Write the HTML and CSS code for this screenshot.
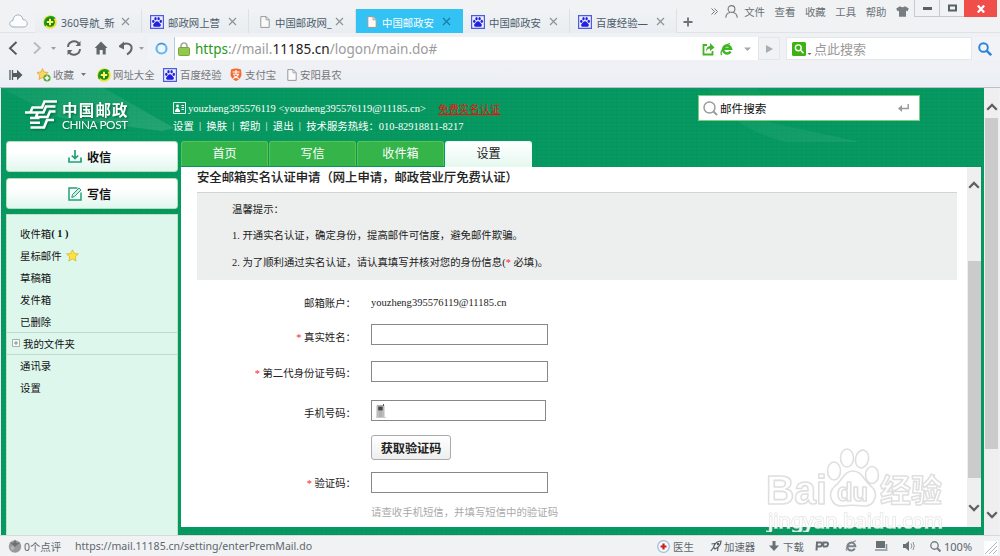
FILE: index.html
```html
<!DOCTYPE html>
<html lang="zh-CN">
<head>
<meta charset="utf-8">
<title>中国邮政安全邮箱</title>
<link rel="stylesheet" href="styles.css">
</head>
<body>
<svg class="defs" aria-hidden="true">
  <symbol id="page" viewBox="0 0 10 12"><path d="M.8.6h5.4l3 3v7.8H.8z" fill="#fafafa" stroke="#999" stroke-width="1"/><path d="M6 .8v3h3" fill="none" stroke="#999" stroke-width=".9"/></symbol>
  <symbol id="paw" viewBox="0 0 14 14"><path d="M.6.6h12.8v12.8H.6z" fill="#eef" stroke="#4d5be0" stroke-width="1.2"/><g fill="#2222dc"><ellipse cx="3.3" cy="6.3" rx="1.2" ry="1.6"/><ellipse cx="5.5" cy="3.7" rx="1.2" ry="1.6"/><ellipse cx="8.6" cy="3.7" rx="1.2" ry="1.6"/><ellipse cx="10.8" cy="6.3" rx="1.2" ry="1.6"/><path d="M7 6.3c1.6 0 2.2 1.7 3.2 2.5 1.5 1.4.3 3.4-1.5 3H5.3c-1.8.4-3-1.6-1.5-3C4.800 8 5.400 6.300 7 6.300z"/></g></symbol>
  <symbol id="plus360" viewBox="0 0 14 14"><circle cx="7" cy="7" r="6.800" fill="#e9e32a"/><path d="M2 11.500A6.800 6.800 0 0 1 12.500 3L7 7z" fill="#279b25"/><circle cx="7.200" cy="7.200" r="4.600" fill="#168621"/><path d="M7 3.800v6.400M3.800 7h6.400" stroke="#fff95c" stroke-width="2"/></symbol>
  <symbol id="close" viewBox="0 0 9 9"><path d="M1 1l7 7M8 1L1 8" fill="none" stroke="currentColor" stroke-width="1.2"/></symbol>
  <symbol id="up" viewBox="0 0 12 8"><path d="M1.200 6.800L6 2l4.800 4.800" fill="none" stroke="#606060" stroke-width="2.300"/></symbol>
  <symbol id="down" viewBox="0 0 12 8"><path d="M1.200 1.200L6 6l4.800-4.800" fill="none" stroke="#606060" stroke-width="2.300"/></symbol>
</svg>
<div class="window">
  <header class="titlebar">
    <div class="cloud"><svg width="19" height="14" viewBox="0 0 19 14"><path d="M5 13C-.5 13-.5 7 4 6.500 4-.5 13-1 14 5.500c5 0 6 7.500.5 7.500z" fill="#fafcfd" stroke="#9db0bd"/></svg></div>
    <nav class="tabs">
      <div class="tab"><svg class="fav"><use href="#plus360"/></svg><span class="name">360导航_新</span><svg class="x"><use href="#close"/></svg></div>
      <div class="tab"><svg class="fav"><use href="#paw"/></svg><span class="name">邮政网上营</span><svg class="x"><use href="#close"/></svg></div>
      <div class="tab"><svg class="fav doc"><use href="#page"/></svg><span class="name">中国邮政网_</span><svg class="x"><use href="#close"/></svg></div>
      <div class="tab active"><svg class="fav doc"><use href="#page"/></svg><span class="name">中国邮政安</span><svg class="x"><use href="#close"/></svg></div>
      <div class="tab"><svg class="fav"><use href="#paw"/></svg><span class="name">中国邮政安</span><svg class="x"><use href="#close"/></svg></div>
      <div class="tab"><svg class="fav"><use href="#paw"/></svg><span class="name">百度经验—</span><svg class="x"><use href="#close"/></svg></div>
    </nav>
    <svg class="newtab" width="10" height="10" viewBox="0 0 10 10"><path d="M5 .5v9M.5 5h9" stroke="#6b7278" stroke-width="1.800"/></svg>
    <div class="menu">
      <svg width="7" height="7" viewBox="0 0 7 7"><path d="M.5.5l3 3-3 3M3.500.5l3 3-3 3" fill="none" stroke="#777"/></svg>
      <svg class="person" width="13" height="13" viewBox="0 0 13 13"><circle cx="6.500" cy="4" r="3.400" fill="none" stroke="#777" stroke-width="1.100"/><path d="M.8 12.800c0-3 2-4.800 4.200-5.300M12.200 12.800c0-3-2-4.800-4.200-5.300" fill="none" stroke="#777" stroke-width="1.100"/></svg>
      <span>文件</span><span>查看</span><span>收藏</span><span>工具</span><span>帮助</span>
      <svg width="13" height="11" viewBox="0 0 13 11"><path d="M4 .3Q6.500 2 9 .3l3.800 2.200-1.300 2.800-1.500-.6V10.700H3V4.700l-1.500.6L.2 2.500z" fill="#777d80"/></svg>
    </div>
    <div class="controls">
      <div class="ctl"><svg width="9" height="3"><path d="M0 0h9v3H0z" fill="#596065"/></svg></div>
      <div class="ctl"><svg width="9" height="8"><path d="M1 1.500h7v5H1z" fill="none" stroke="#596065" stroke-width="2"/></svg></div>
      <div class="ctl shut"><svg width="8" height="8"><path d="M.8.5l6.400 7M7.200.5l-6.400 7" stroke="#fff" stroke-width="2.200"/></svg></div>
    </div>
  </header>

  <div class="toolbar">
    <div class="navicons">
      <svg width="114" height="18" viewBox="0 0 114 18">
        <path d="M11.500 3L5 9.200l6.500 6.200" fill="none" stroke="#53595e" stroke-width="2"/>
        <path d="M29 3.500L35 9l-6 5.500" fill="none" stroke="#b5babe" stroke-width="1.800"/>
        <path d="M46 8h5l-2.500 3z" fill="#999fa3"/>
        <path d="M63 8a6 6 0 0 1 11-3M75 10a6 6 0 0 1-11 3" fill="none" stroke="#60676c" stroke-width="2"/><path d="M75.500 2v5h-5zM62.500 16v-5h5z" fill="#60676c"/>
        <path d="M96 2.500l6.500 6.500h-1.800v6.500h-3V11h-3v4.500h-3.200V9h-1.800z" fill="#60676c"/>
      </svg>
      <svg width="30" height="18" viewBox="0 0 30 18"><path d="M2.500 6.500C7 2.500 13.500 5 12.500 10c-.4 2.500-2 4-4.500 5.500" fill="none" stroke="#60676c" stroke-width="2"/><path d="M-1 7.500L5 2.500v8z" fill="#60676c"/><path d="M20 8h5l-2.500 3z" fill="#999fa3"/></svg>
    </div>
    <div class="address">
      <div class="globe"><svg width="13" height="13"><circle cx="6.500" cy="6.500" r="5" fill="#e9f8ff" stroke="#6db5e8" stroke-width="2.200"/><path d="M3 3a5 5 0 0 1 7 0" fill="none" stroke="#4181c4" stroke-width="1"/></svg></div>
      <svg class="lock" width="12" height="14" viewBox="0 0 12 14"><path d="M3 6V4a3 3 0 0 1 6 0v2" fill="none" stroke="#a8aaa5" stroke-width="1.700"/><rect x=".5" y="5.500" width="11" height="8" rx="1" fill="#92c94c" stroke="#76a942"/></svg>
      <div class="url"><span class="scheme">https</span>://mail.<span class="domain">11185.cn</span>/logon/main.do#</div>
      <svg class="addr-icons" width="50" height="14" viewBox="0 0 50 14">
        <path d="M5 3H1.500v9.500h9V9" fill="none" stroke="#42b427" stroke-width="1.800"/><path d="M4 10c0-4 1.500-6 4-6V1l4.500 4.500L8 9V6.500C6 6.500 5 7.500 4 10z" fill="#42b427"/>
        <path d="M28.500 9.500a4 4 0 1 1 .5-2.800h-7" fill="none" stroke="#42b427" stroke-width="2.500"/><path d="M20 13c-3-2 2-10 8-11.500" fill="none" stroke="#42b427" stroke-width="1.200"/>
        <path d="M42 5.500h7L45.500 9z" fill="#a5a9ac"/>
      </svg>
    </div>
    <div class="go"><svg width="7" height="8"><path d="M0 0l7 4-7 4z" fill="#a9adb2"/></svg></div>
    <div class="search">
      <svg class="so" width="20" height="14" viewBox="0 0 20 14"><rect width="14" height="14" rx="1.500" fill="#3db313"/><circle cx="6.300" cy="5.800" r="2.900" fill="none" stroke="#fff" stroke-width="1.400"/><path d="M8.500 8l3 3.200" stroke="#fff" stroke-width="1.600"/><path d="M15.500 11h4L17.500 13z" fill="#666"/></svg>
      <span>点此搜索</span>
    </div>
    <div class="find"><svg width="14" height="14"><circle cx="5.500" cy="5.500" r="4.300" fill="none" stroke="#2b82dc" stroke-width="1.900"/><path d="M8.600 8.600l4.600 4.600" stroke="#2b82dc" stroke-width="2.400"/></svg></div>
  </div>

  <div class="bookmarks">
    <svg class="b-side" width="14" height="12" viewBox="0 0 14 12"><path d="M1 1v10M3.500 1v10" stroke="#555c60" stroke-width="1.300"/><path d="M4 4h4V.8L13.500 6 8 11.200V8H4z" fill="#555c60"/></svg>
    <div class="bm b-fav"><svg width="14" height="14" viewBox="0 0 14 14"><path d="M5.500.7L7 4l4 .5-3 3 .8 4-3.500-2L2 11.500l.6-4L0 4.500 4 4z" fill="#ffd462" stroke="#e6a338" stroke-width=".8"/><circle cx="10" cy="10" r="3.600" fill="#53ad36"/><path d="M10 7.800v4.400M7.800 10h4.400" stroke="#fff" stroke-width="1.500"/></svg><span>收藏</span><svg class="caret" width="5" height="3"><path d="M0 0h5L2.500 3z" fill="#777"/></svg></div>
    <div class="bm b-nav"><svg width="14" height="14"><use href="#plus360"/></svg><span>网址大全</span></div>
    <div class="bm b-baidu"><svg width="14" height="14"><use href="#paw"/></svg><span>百度经验</span></div>
    <div class="bm b-pay"><svg width="12" height="13" viewBox="0 0 12 13"><path d="M1 1.500Q6-.5 11 1.500L11.500 7Q10.500 11 6 13 1.500 11 .5 7z" fill="#f06c32"/><path d="M2.500 4h7M6 2v4M3 6.300h5.500C7.500 9 5 10 2.800 10.500M4 7.500c1 1.500 3 2.500 5 3" fill="none" stroke="#fff" stroke-width="1.100"/></svg><span>支付宝</span></div>
    <div class="bm b-doc"><svg width="10" height="12"><use href="#page"/></svg><span>安阳县农</span></div>
  </div>

  <div class="viewport">
    <div class="mail">
      <div class="masthead">
        <svg class="rays" width="983" height="54" viewBox="0 0 983 54"><defs><linearGradient id="ray" x1="0" y1="0" x2="1" y2="1"><stop offset="0" stop-color="#fff" stop-opacity=".04"/><stop offset="1" stop-color="#fff" stop-opacity=".12"/></linearGradient></defs><path d="M0 0h103l70 40-12 3L60 30z" fill="url(#ray)"/><path d="M707 0h50l10 34 92 20h-75Q725 38 707 0z" fill="url(#ray)" opacity=".55"/></svg>
        <div class="logo">
          <svg width="32" height="29" viewBox="0 0 32 29"><g fill="none" stroke="#fff" stroke-width="2.600"><path d="M32 1.500H19.500l-2.500 6H7.500l-2 4.800M30.500 6.500H21l-2.500 6H0M30.500 11.500h-5.500l-2.500 5.500H11l1.500-4M5 18h9.500M5.500 27.500H19l3-7.500h7M5 22.700h10"/></g></svg>
          <div class="brand"><b>中国邮政</b><span>CHINA POST</span></div>
        </div>
        <div class="account">
          <div class="user"><svg width="13" height="12" viewBox="0 0 13 12"><path d="M.5.5h12v11H.5z" fill="none" stroke="#e3f5ee"/><circle cx="4.500" cy="4" r="1.400" fill="#fff"/><path d="M2 10V8.500L4 6h1l2 2.500V10zM8.500 3h2.500v1H8.500zM8.500 5h2.500v1H8.500zM8.500 7h2.500v1H8.500z" fill="#fff"/></svg><span class="uid">youzheng395576119 &lt;youzheng395576119@11185.cn&gt;</span><a>免费实名认证</a></div>
          <div class="links"><span>设置</span><i>|</i><span>换肤</span><i>|</i><span>帮助</span><i>|</i><span>退出</span><i>|</i><span>技术服务热线：010-82918811-8217</span></div>
        </div>
        <div class="mailsearch"><svg width="15" height="15"><circle cx="6.500" cy="6.500" r="5.500" fill="none" stroke="#999" stroke-width="1.400"/><path d="M10.500 10.500L14 14" stroke="#999" stroke-width="1.800"/></svg><span>邮件搜索</span><svg class="enter" width="11" height="8" viewBox="0 0 11 8"><path d="M10.200 0v4.500H3" fill="none" stroke="#999" stroke-width="1.400"/><path d="M0 4.500L4 1v7z" fill="#999"/></svg></div>
      </div>
      <div class="body">
        <aside class="side">
          <div class="big"><svg width="14" height="13" viewBox="0 0 14 13"><path d="M1 7.500V12h12V7.500M7 0v8M3.800 5.500L7 8.600l3.200-3.100" fill="none" stroke="#20a277" stroke-width="1.700"/></svg><b>收信</b></div>
          <div class="big"><svg width="14" height="14" viewBox="0 0 14 14"><path d="M9.500 1H1v12h12V5.500" fill="none" stroke="#20a277" stroke-width="1.500"/><path d="M3.800 10.500l.7-3L11 1l2 2-6.500 6.500z" fill="#c8ebdd" stroke="#20a277"/></svg><b>写信</b></div>
          <div class="folders">
            <div>收件箱<b>( 1 )</b></div>
            <div>星标邮件<svg class="star" width="13" height="13" viewBox="0 0 13 13"><path d="M6.500.8l1.700 3.700 4.200.5-3.100 2.800.8 4.200-3.600-2.100-3.700 2.100.9-4.200L.6 5l4.200-.5z" fill="#ffe23c" stroke="#d6b62c" stroke-width=".8"/></svg></div>
            <div>草稿箱</div>
            <div>发件箱</div>
            <div>已删除</div>
            <div class="group"><svg width="8" height="8"><path d="M.5.5h7v7h-7z" fill="#f4fcf8" stroke="#a7b0ac"/><path d="M2 4h4M4 2v4" stroke="#777" stroke-width=".8"/></svg>我的文件夹</div>
            <div>通讯录</div>
            <div>设置</div>
          </div>
        </aside>
        <main class="main">
          <div class="pagetabs"><span>首页</span><span>写信</span><span>收件箱</span><span class="on">设置</span></div>
          <div class="frame">
            <div class="content">
              <h1>安全邮箱实名认证申请（网上申请，邮政营业厅免费认证）</h1>
              <div class="tips">
                <p>温馨提示：</p>
                <p>1. 开通实名认证，确定身份，提高邮件可信度，避免邮件欺骗。</p>
                <p>2. 为了顺利通过实名认证，请认真填写并核对您的身份信息(<em>*</em> 必填)。</p>
              </div>
              <form class="form">
                <label>邮箱账户：</label><span class="mailbox">youzheng395576119@11185.cn</span>
                <label class="low"><em>*</em> 真实姓名：</label><div class="box"></div>
                <label class="low"><em>*</em> 第二代身份证号码：</label><div class="box"></div>
                <label class="low">手机号码：</label><div class="box phone"><svg width="10" height="14" viewBox="0 0 10 14"><path d="M1 1.500h7v12H1z" fill="#ccc" stroke="#999" stroke-width=".7"/><path d="M7.500 0v2" stroke="#555"/><path d="M2.200 2.500h4.500v4H2.200z" fill="#444"/><path d="M2.500 8h4M2.500 10h4M2.500 12h4" stroke="#888" stroke-width=".8"/><path d="M0 13.500h10" stroke="#ccc"/></svg></div>
                <label></label><button type="button">获取验证码</button>
                <label><em>*</em> 验证码：</label><div class="box"></div>
                <label></label><span class="hint">请查收手机短信，并填写短信中的验证码</span>
              </form>
            </div>
            <div class="scroll inner"><svg width="12" height="8"><use href="#up"/></svg><div class="thumb"></div><svg width="12" height="8"><use href="#down"/></svg></div>
          </div>
        </main>
      </div>
    </div>
    <div class="scroll outer"><svg width="12" height="8"><use href="#up"/></svg><div class="thumb"></div><svg width="12" height="8"><use href="#down"/></svg></div>
  </div>

  <footer class="status">
    <svg class="tomato" width="14" height="14" viewBox="0 0 14 14"><circle cx="7" cy="7.500" r="6.200" fill="#999"/><path d="M1.500 3.500L5.500 4 7 .5 8.500 4l4-.5L9 6l-2 2-2-2z" fill="#707070"/><circle cx="4.500" cy="9" r="2" fill="#b5b5b5"/></svg>
    <span class="reviews">0个点评</span>
    <span class="target">https://mail.11185.cn/setting/enterPremMail.do</span>
    <div class="tools">
      <svg class="t-doc" width="13" height="13"><circle cx="6.500" cy="6.500" r="5.800" fill="#f7fbff" stroke="#a2bddb" stroke-width="1.300"/><path d="M6.500 3.500v6M3.500 6.500h6" stroke="#cf1e1e" stroke-width="2.200"/></svg><span class="w-doc">医生</span>
      <svg class="t-rocket" width="12" height="12"><path d="M3.500 7C5 3 7 1 11 1c0 4-2 6-6 8zM5 3.500L1.500 4M8 7.500L7.500 11M3.500 7.500L.8 11" fill="none" stroke="#555d62" stroke-width="1.200"/><circle cx="8" cy="4" r="1.200" fill="#555d62"/></svg><span class="w-rocket">加速器</span>
      <svg class="t-down" width="10" height="10"><path d="M5 0v6" stroke="#697176" stroke-width="3"/><path d="M0 4.500h10L5 10z" fill="#697176"/></svg><span class="w-down">下载</span>
      <svg class="t-glass" width="14" height="10" viewBox="0 0 14 10"><path d="M1.500 9.500L2 1.500h3.500c2.500 0 1.500 4-.5 4H2.500M8 5.500l.5-4h3c2.500 0 1.500 4-.5 4H8" fill="none" stroke="#697176" stroke-width="2"/></svg>
      <svg class="t-ie" width="12" height="12" viewBox="0 0 12 12"><path d="M9.800 8.500a4 4 0 1 1 .5-2.300h-7" fill="none" stroke="#7b8388" stroke-width="2"/><path d="M2 11C-1 9 5 2 11 .8" fill="none" stroke="#7b8388"/></svg>
      <svg class="t-win" width="13" height="10"><path d="M1 0h9v7H1z" fill="#697176"/><path d="M11.500 3v5M0 9h12.500" stroke="#8a9195" stroke-width="1.600"/></svg>
      <svg class="t-vol" width="12" height="10"><path d="M0 3h2.500L6 0v10L2.500 7H0z" fill="#697176"/><path d="M8 2.500q2 2.500 0 5M10 1q2.500 4 0 8" fill="none" stroke="#8d9498"/></svg>
      <svg class="t-zoom" width="11" height="11"><circle cx="4.500" cy="4.500" r="3.700" fill="none" stroke="#777f84" stroke-width="1.400"/><path d="M7 7l3.500 3.500" stroke="#777f84" stroke-width="2"/></svg><span class="pct">100%</span>
    </div>
    <svg class="grip" width="14" height="14"><path d="M0 0h14v14H0z" fill="#fff"/><path d="M1 13L13 1M5 13l8-8M9 13l4-4" stroke="#adbac5"/></svg>
  </footer>
  <svg class="watermark" width="190" height="92" viewBox="0 0 190 92">
    <g fill="#fff" stroke="#dcdcdc" stroke-width="1.600" stroke-linejoin="round">
      <text class="wm-latin" x="6" y="64" textLength="61" lengthAdjust="spacingAndGlyphs">Bai</text>
      <ellipse cx="74" cy="31" rx="6.500" ry="9"/><ellipse cx="87" cy="18" rx="6.500" ry="9"/><ellipse cx="102" cy="19" rx="6.500" ry="9" transform="rotate(12 102 19)"/><ellipse cx="112" cy="35" rx="6.500" ry="8.500"/>
      <path d="M93 31c9 0 11 10 18 15 9 8 3 21-8 20-7-1-14-1-20 0-11 1-17-12-8-20 7-5 9-15 18-15z"/>
      <text class="wm-du" x="77" y="61" textLength="31" lengthAdjust="spacingAndGlyphs">du</text>
      <text class="wm-cjk" x="120" y="62" textLength="62" lengthAdjust="spacingAndGlyphs">经验</text>
    </g>
    <text class="wm-url" x="8" y="88" textLength="175" lengthAdjust="spacingAndGlyphs">jingyan.baidu.com</text>
  </svg>
</div>
</body>
</html>
```
FILE: styles.css
```css
* { box-sizing: border-box; }
body { margin: 0; font-family: "Noto Sans", "Noto Sans CJK SC", sans-serif; font-size: 10.4px; color: #222; }
svg { display: block; flex: none; }
.defs { position: absolute; width: 0; height: 0; }
.window { position: relative; width: 1000px; height: 556px; overflow: hidden; display: flex; flex-direction: column; background: #f0f2f4; white-space: nowrap; }
span, b, label, a { flex: none; }

/* Title bar */
.titlebar { height: 33px; display: flex; flex: none; border-bottom: 1px solid #dfe3e6; }
.cloud { width: 35px; padding: 14px 0 0 9px; }
.tabs { display: flex; padding-top: 9px; }
.tab { width: 107px; height: 24px; display: flex; align-items: center; padding: 2px 0 0 8px; border-right: 1px solid #dce1e6; background: linear-gradient(#f1f3f5, #e9edf1); color: #4c5b6b; }
.tab.active { background: #33c2f4; color: #fff; border: 0; }
.fav { width: 14px; height: 14px; margin-right: 4px; }
.fav.doc { width: 10px; height: 12px; margin: 0 5px 0 3px; }
.name { width: 57px; margin-right: 3px; }
.tab .x { width: 9px; height: 9px; color: #8c949a; margin-top: -2px; }
.active .x { color: #197c9d; }
.newtab { margin: 17px 18px 0 6px; }
.menu { display: flex; height: 22px; align-items: center; color: #6b7175; gap: 9.600px; }
.menu .person { margin: 0 -3px 0 -3px; }
.controls { display: flex; margin-left: auto; padding-right: 3px; }
.ctl { width: 25px; height: 17px; display: flex; align-items: center; justify-content: center; border: 1px solid #c5cad0; border-top: 0; border-right: 0; }
.ctl.shut { width: 33px; background: #ef4e4b; border: 0; }

/* Address bar */
.toolbar { height: 30px; flex: none; display: flex; padding-top: 4px; background: #eff1f5; }
.toolbar > div { height: 23px; }
.navicons { width: 148px; display: flex; align-items: center; padding-left: 5px; }
.navicons svg { margin-top: -2px; }
.address { width: 610px; background: #fff; display: flex; align-items: center; }
.globe { width: 27px; height: 23px; display: flex; align-items: center; justify-content: center; background: #f0f4f8; border-right: 1px solid #b7c9dd; }
.lock { margin-left: 3px; }
.url { margin-left: 5px; font-size: 13.540px; color: #9b9b9b; }
.scheme { color: #1d9b18; }
.domain { color: #222; }
.addr-icons { margin-left: auto; margin-right: 6px; }
.go { width: 22px; background: #f1f2f4; border: 1px solid #e4e7ea; display: flex; align-items: center; justify-content: center; }
.search { width: 186px; margin-left: 6px; background: #fff; border: 1px solid #e4e7ea; display: flex; align-items: center; padding-left: 5px; font-size: 13px; color: #999; gap: 2px; }
.find { width: 28px; background: #f1f3f6; display: flex; align-items: center; justify-content: center; }
.find svg { margin-left: -2px; }

/* Bookmarks */
.bookmarks { height: 25px; flex: none; display: flex; align-items: center; background: linear-gradient(#eff1f5, #ebeff5); border-bottom: 1px solid #bcc1c5; color: #777; padding: 0 0 1px 9px; }
.bm { display: flex; align-items: center; gap: 3px; }
.b-fav { width: 60px; margin-left: 14px; gap: 2px; }
.b-fav .caret { margin-left: 5px; }
.b-nav { width: 66px; gap: 2px; }
.b-baidu { width: 67px; }
.b-pay { width: 57px; }

/* Mail page */
.viewport { height: 447px; flex: none; display: flex; padding-left: 1px; }
.mail { width: 983px; display: flex; flex-direction: column; background-color: #069961; background-image: repeating-linear-gradient(0deg, rgba(0,70,40,.045) 0 1px, transparent 1px 4px), repeating-linear-gradient(90deg, rgba(0,70,40,.045) 0 1px, transparent 1px 5px); }
.masthead { position: relative; height: 53px; flex: none; display: flex; color: #fff; }
.rays { position: absolute; left: 0; top: 0; }
.logo { position: relative; width: 172px; display: flex; padding: 12px 0 0 24px; gap: 5px; filter: drop-shadow(1px 1px 1px #00693f); }
.brand { display: flex; flex-direction: column; padding-top: 1px; }
.brand b { font-size: 15.500px; line-height: 18px; letter-spacing: 1.200px; }
.brand span { font-family: Lato, sans-serif; font-size: 11.800px; line-height: 12px; letter-spacing: -.4px; }
.account { position: relative; width: 525px; padding-top: 11px; font-family: "Liberation Serif", "Noto Sans CJK SC", serif; }
.user, .links { display: flex; height: 18px; align-items: center; }
.links { margin-top: -1px; }
.uid { width: 238px; margin: 0 12px 0 2px; font-size: 10.530px; }
.user a { color: #e6130b; text-decoration: underline; }
.links i { width: 12.500px; text-align: center; font-style: normal; }
.mailsearch { position: relative; width: 222px; height: 26px; margin-top: 7px; padding: 0 10px 0 4px; background: #fff; border: 1px solid #7bd07b; color: #111; display: flex; align-items: center; gap: 2px; font-size: 11.600px; }
.enter { margin-left: auto; }
.body { display: flex; height: 394px; padding-left: 5px; }
.side { width: 175px; padding-right: 3px; display: flex; flex-direction: column; gap: 6px; }
.big { height: 31px; flex: none; border: 1px solid #b4dfb6; border-radius: 3px; background: linear-gradient(#fff 35%, #e0f7ee); display: flex; align-items: center; padding-left: 61px; gap: 5px; font-size: 12.100px; color: #111; }
.folders { flex: 1; margin-top: -1px; padding-top: 8px; background: #def7ed; border: 1px solid #bce4bf; border-bottom: 0; font-family: "Liberation Serif", "Noto Sans CJK SC", serif; color: #111; }
.folders > div { height: 21.800px; display: flex; align-items: center; padding-left: 13px; }
.folders .star { margin-left: 4px; }
.folders .group { height: 23px; padding-left: 5px; gap: 3px; border: 1px solid #c1d9cc; border-width: 1px 0; }
.main { width: 800px; }
.pagetabs { display: flex; height: 26px; gap: 1px; }
.pagetabs span { width: 87px; height: 25px; border: 1px solid #5bc34c; border-bottom: 0; border-radius: 3px 3px 0 0; background: #35b44a; color: #fff; font-size: 12.100px; line-height: 23px; text-align: center; }
.pagetabs .on { height: 26px; background: linear-gradient(#fff, #e5f8f0); color: #222; border-color: #eefaf4; }
.frame { height: 360px; background: #fff; display: flex; justify-content: space-between; }
.content { width: 776px; padding-left: 16px; font-family: "Liberation Serif", "Noto Sans CJK SC", serif; }
h1 { margin: 0; height: 25px; line-height: 23px; font-size: 12.350px; color: #222; font-weight: 500; -webkit-text-stroke: .1px #222; }
.tips { height: 88px; background: #edefee; border-top: 1px solid #d1d4d3; padding: 4px 0 0 35px; }
p { margin: 0; line-height: 26.300px; }
em { color: #f22; font-style: normal; }
.form { display: grid; grid-template-columns: 159px 200px; column-gap: 15px; grid-template-rows: 30px 35px 38px 41px 33px 37px 20px; align-items: center; margin-top: 7px; }
.form label { text-align: right; }
.form .low { padding-top: 3px; }
.mailbox { font-size: 10.530px; }
.box { width: 177px; height: 21px; border: 1px solid #888; background: #fff; }
.box.phone { width: 175px; padding: 3px 4px; }
button { width: 80px; height: 25px; padding: 0; border: 1px solid #aaa; border-radius: 3px; background: linear-gradient(#fff, #eee); font: bold 12.150px "Noto Sans CJK SC", sans-serif; color: #222; }
.hint { color: #aaa; }

/* Scrollbars */
.scroll { display: flex; flex-direction: column; align-items: center; background: #efefef; }
.scroll .thumb { background: #cbcbcb; }
.inner { width: 14px; padding: 14px 0 15px; }
.inner .thumb { width: 13px; height: 217px; margin: 72px 0 26px; }
.outer { width: 15px; padding: 15px 0 15px; }
.outer .thumb { width: 13px; height: 331px; margin: 7px 0 62px; }

/* Status bar */
.status { height: 21px; flex: none; display: flex; align-items: center; border-top: 1px solid #d7dadd; color: #5f666b; padding-left: 8px; }
.reviews { width: 51px; margin-left: 2px; }
.target { font-size: 10.570px; }
.tools { display: flex; align-items: center; margin-left: auto; }
.w-doc { width: 37px; margin-left: 3px; }
.w-rocket { width: 45px; margin-left: 2px; }
.w-down { width: 32px; margin-left: 4px; }
.t-glass { margin-right: 16px; }
.t-ie { margin-right: 18px; }
.t-win { margin-right: 15px; }
.t-vol { margin-right: 15px; }
.pct { width: 30px; margin-left: 3px; font-size: 11px; }
.grip { margin: 4px 2px 0 10px; }

/* Watermark floats over the page corner */
.watermark { position: absolute; left: 760px; top: 440px; opacity: .9; }
.wm-latin { font: bold 41px "Liberation Sans", sans-serif; }
.wm-du { font: bold 25px "Liberation Sans", sans-serif; }
.wm-cjk { font: bold 32px "Noto Sans CJK SC", sans-serif; }
.wm-url { font: 20px "Noto Sans", sans-serif; fill: #fff; stroke: #e2e2e2; stroke-width: 1.600px; paint-order: stroke; }
```
